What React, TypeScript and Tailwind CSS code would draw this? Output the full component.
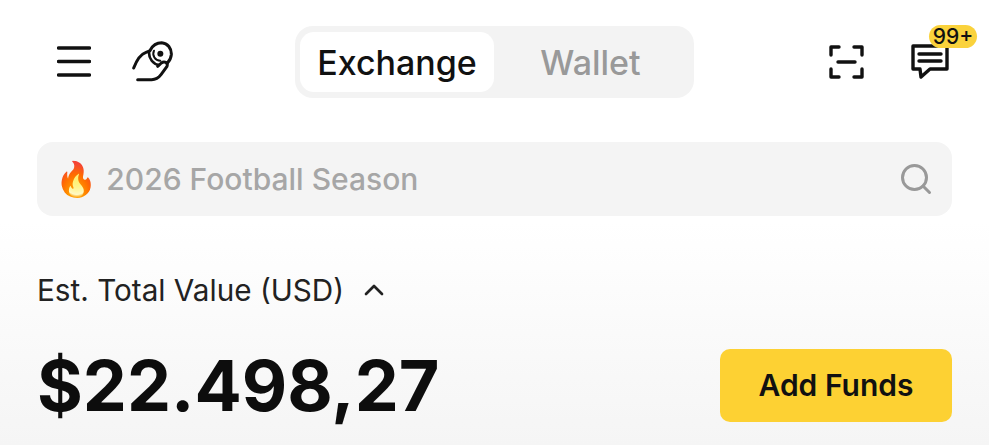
import { ChevronUp, Search } from 'lucide-react';

function MenuIcon() {
  return (
    <svg width="34" height="31" viewBox="0 0 34 31" fill="none" stroke="#111" strokeWidth="3.4" strokeLinecap="round">
      <path d="M1.5 2 H32.5" />
      <path d="M1.5 15.5 H32.5" />
      <path d="M1.5 29 H32.5" />
    </svg>
  );
}

function CoinHand() {
  // traced from the reference, viewBox is in 3x crop units
  return (
    <svg width="42" height="42" viewBox="300 62 126 126" fill="none" stroke="#111" strokeWidth="9" strokeLinecap="round" strokeLinejoin="round">
      <path d="M308 146 C316 125 325 106 345 99 L356 95" />
      <path d="M358 92 C365 78 378 70 392 70 C410 71 422 88 421 106 C420 116 416 124 410 130" />
      <path d="M354 100 C354 118 366 134 384 137" strokeWidth="8" />
      <path d="M369 94 A21 21 0 0 0 388 124" strokeWidth="6" />
      <path d="M320 181 H362 C376 181 384 174 390 166 L408 141 C412 130 400 124 391 131 L380 141" />
      <circle cx="388" cy="103" r="9" fill="#111" stroke="none" />
    </svg>
  );
}

function ScanIcon() {
  return (
    <svg width="35" height="34" viewBox="0 0 35 34" fill="none" stroke="#111" strokeWidth="3.4" strokeLinecap="round" strokeLinejoin="round">
      <path d="M2 10 V2 H10" />
      <path d="M25 2 H33 V10" />
      <path d="M2 24 V32 H10" />
      <path d="M25 32 H33 V24" />
      <path d="M9 17 H26" />
    </svg>
  );
}

function ChatIcon() {
  return (
    <svg width="38" height="35" viewBox="0 0 38 35" fill="none" stroke="#111" strokeWidth="3.4" strokeLinecap="round" strokeLinejoin="round">
      <path d="M2 2 H36 V25 H19 L10 33 L9 25 H2 Z" />
      <path d="M8 10 H30" />
      <path d="M8 17 H30" />
    </svg>
  );
}

export default function App() {
  return (
    <div className="h-[445px] w-[989px] overflow-hidden bg-gradient-to-b from-white from-50% to-[#f5f5f5] font-['Inter',sans-serif] text-[#111]">
      {/* Top bar */}
      <div className="flex h-[142px] items-start pl-[57px] pt-[26px]">
        <div className="flex w-[238px] items-center gap-[40px] pt-[14px]">
          <MenuIcon />
          <CoinHand />
        </div>
        <div className="flex h-[72px] w-[399px] items-center rounded-[18px] bg-[#f3f3f3] p-[5px]">
          <div className="flex h-[60px] w-[194px] items-center justify-center rounded-[14px] bg-white text-[34px] font-medium">
            Exchange
          </div>
          <div className="flex-1 pr-[2px] text-center text-[34px] font-medium text-[#999]">Wallet</div>
        </div>
        <div className="ml-[135px] flex items-center gap-[47px] pt-[18px]">
          <ScanIcon />
          <div className="relative">
            <ChatIcon />
            <span className="absolute -top-[19px] left-[18px] flex h-[23px] w-[48px] items-center justify-center rounded-full bg-[#fad23c] text-[21px] font-medium">
              99+
            </span>
          </div>
        </div>
      </div>

      {/* Search */}
      <div className="mx-[37px] flex h-[74px] w-[915px] items-center rounded-[16px] bg-[#f4f4f4] pl-[18px] pr-[18px]">
        <span className="font-['Noto_Color_Emoji','Inter',sans-serif] text-[34px] leading-none">🔥</span>
        <span className="ml-[9px] flex-1 text-[30px] font-medium text-[#a6a6a6]">2026 Football Season</span>
        <Search size={36} strokeWidth={2} color="#999" />
      </div>

      {/* Value */}
      <div className="ml-[37px] mt-[52px] flex h-[44px] items-center gap-[14px] text-[29.7px] text-[#222]">
        <span>Est. Total Value (USD)</span>
        <ChevronUp size={32} strokeWidth={2} />
      </div>
      <div className="mx-[37px] mt-[37px] flex items-center justify-between">
        <div className="text-[70px] font-bold leading-none text-[#0d0d0d]">$22.498,27</div>
        <button className="h-[73px] w-[232px] rounded-[10px] bg-[#fdd133] text-[30px] font-semibold">Add Funds</button>
      </div>
    </div>
  );
}
